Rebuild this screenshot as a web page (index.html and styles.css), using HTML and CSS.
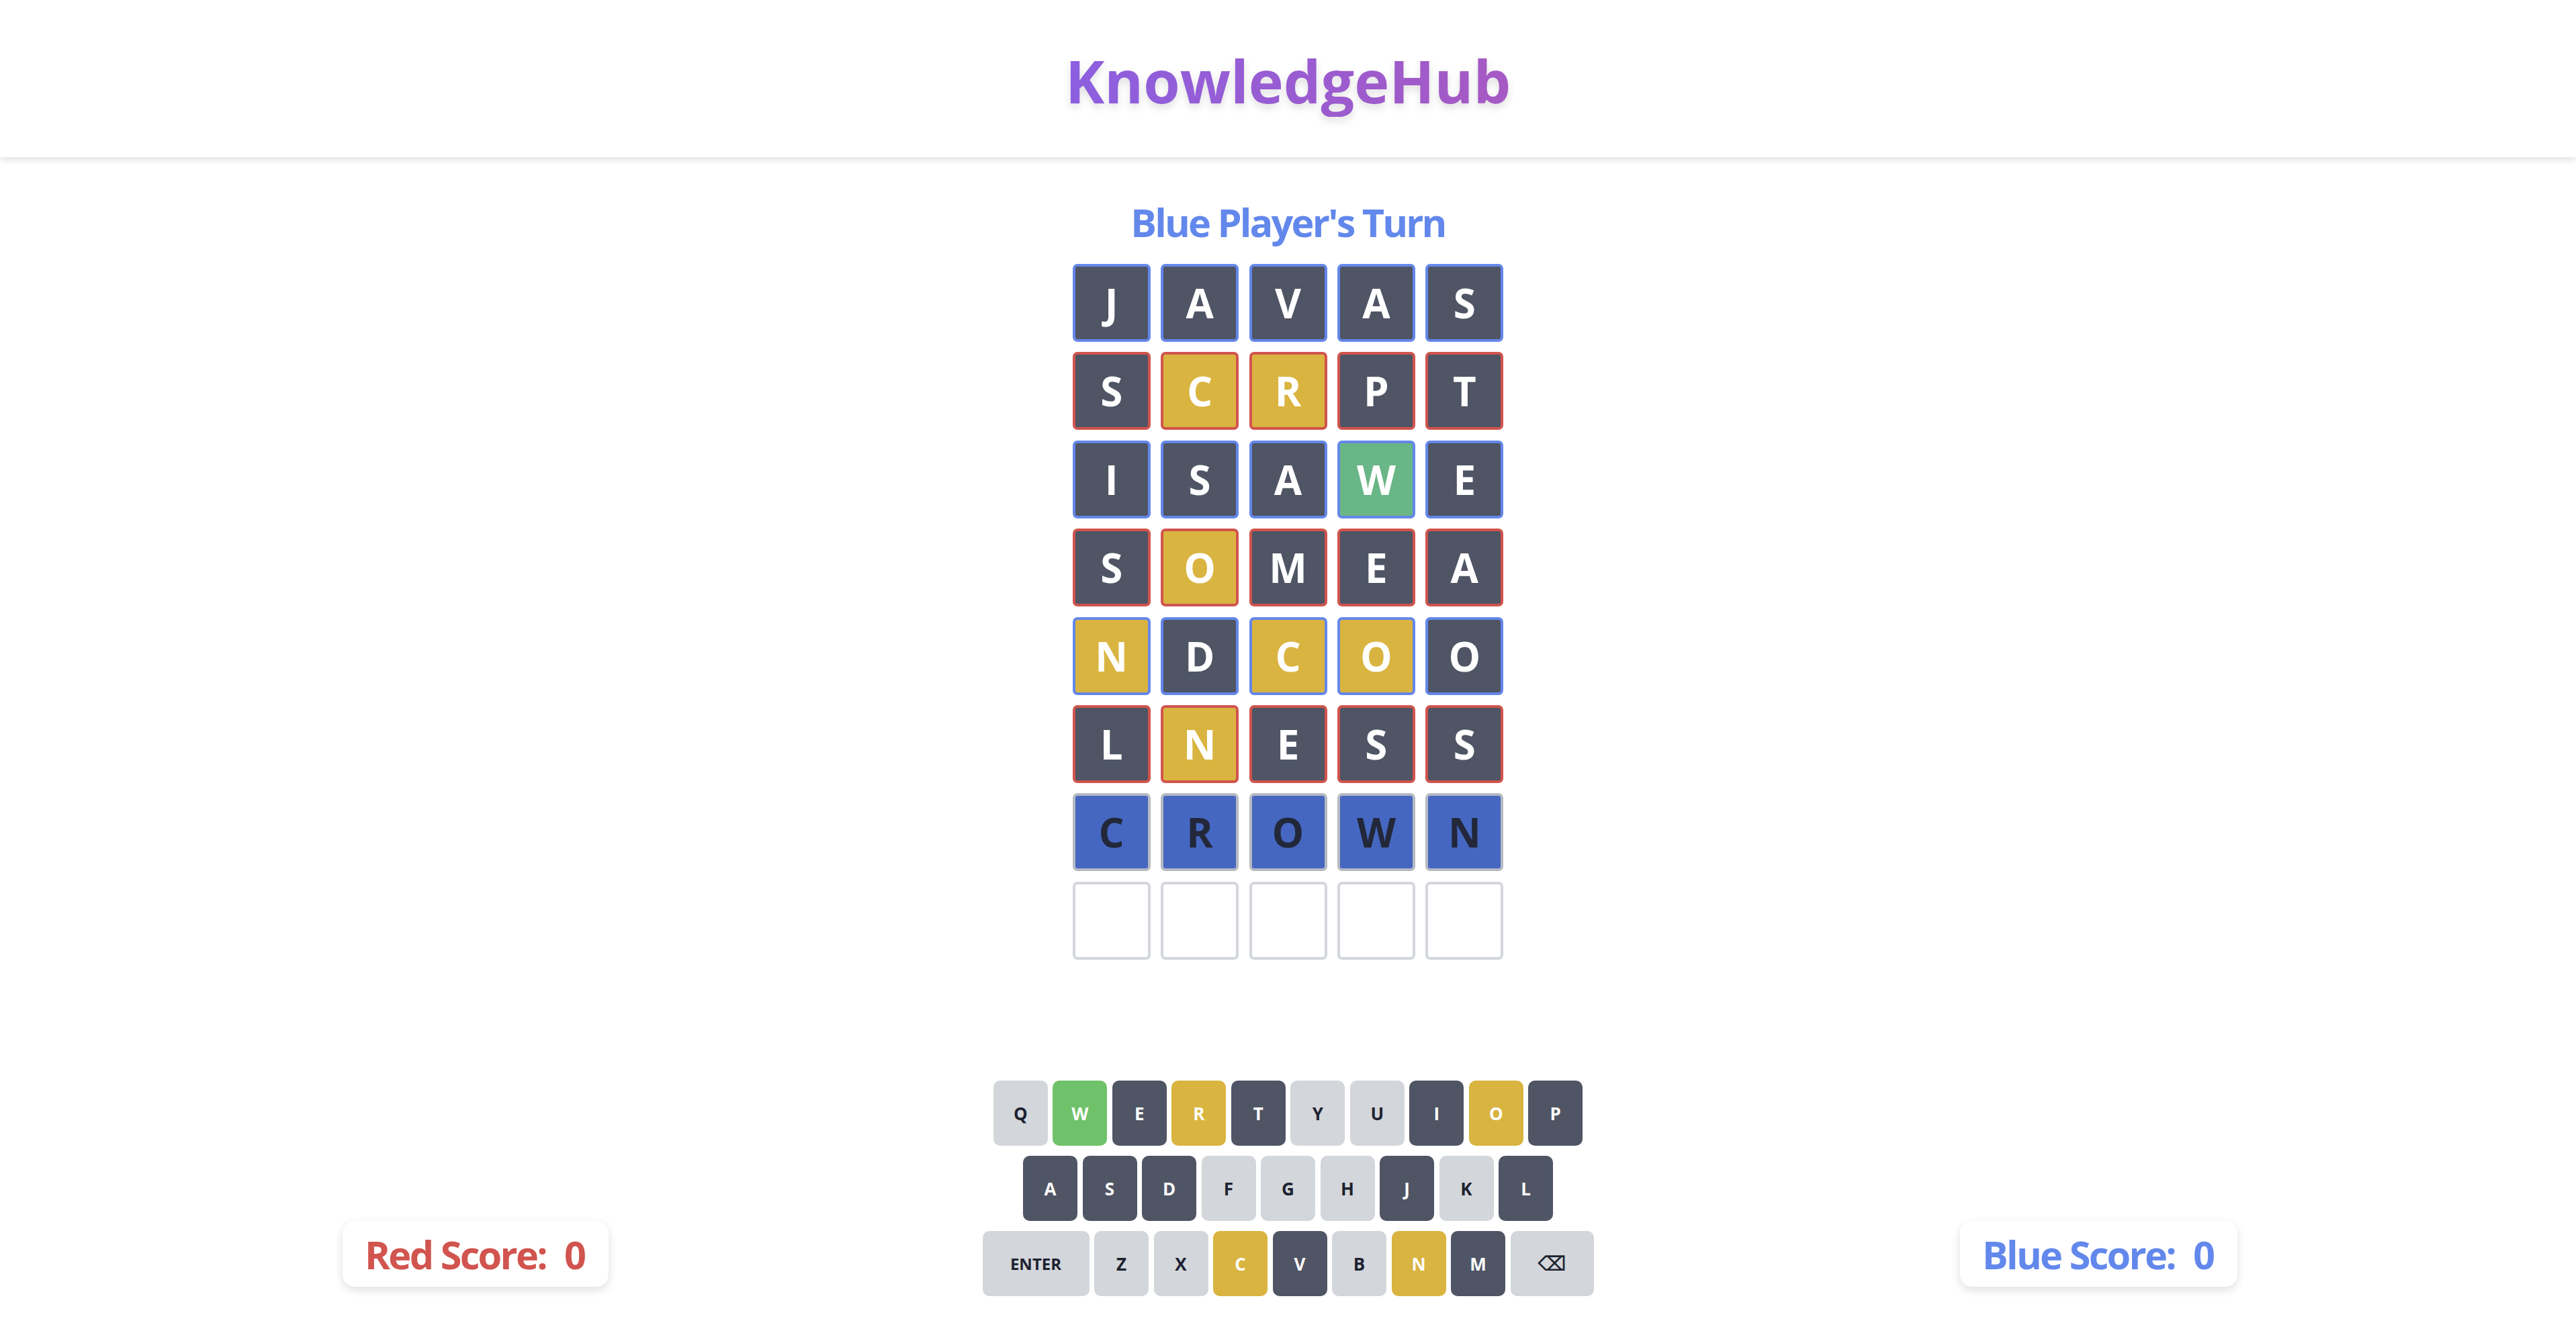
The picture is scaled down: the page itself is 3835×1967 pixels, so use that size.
FILE: index.html
```html
<!DOCTYPE html>
<html lang="en">
<head>
<meta charset="utf-8">
<title>KnowledgeHub</title>
<link rel="stylesheet" href="styles.css">
</head>
<body>
<div class="app">
  <header class="header">
    <h1 class="logo">KnowledgeHub</h1>
  </header>
  <main class="game">
    <h2 class="turn">Blue Player's Turn</h2>
    <div class="board">
      <div class="row row-blue">
        <div class="tile dark">J</div><div class="tile dark">A</div><div class="tile dark">V</div><div class="tile dark">A</div><div class="tile dark">S</div>
      </div>
      <div class="row row-red">
        <div class="tile dark">S</div><div class="tile yellow">C</div><div class="tile yellow">R</div><div class="tile dark">P</div><div class="tile dark">T</div>
      </div>
      <div class="row row-blue">
        <div class="tile dark">I</div><div class="tile dark">S</div><div class="tile dark">A</div><div class="tile green">W</div><div class="tile dark">E</div>
      </div>
      <div class="row row-red">
        <div class="tile dark">S</div><div class="tile yellow">O</div><div class="tile dark">M</div><div class="tile dark">E</div><div class="tile dark">A</div>
      </div>
      <div class="row row-blue">
        <div class="tile yellow">N</div><div class="tile dark">D</div><div class="tile yellow">C</div><div class="tile yellow">O</div><div class="tile dark">O</div>
      </div>
      <div class="row row-red">
        <div class="tile dark">L</div><div class="tile yellow">N</div><div class="tile dark">E</div><div class="tile dark">S</div><div class="tile dark">S</div>
      </div>
      <div class="row row-current">
        <div class="tile typed">C</div><div class="tile typed">R</div><div class="tile typed">O</div><div class="tile typed">W</div><div class="tile typed">N</div>
      </div>
      <div class="row row-empty">
        <div class="tile empty"></div><div class="tile empty"></div><div class="tile empty"></div><div class="tile empty"></div><div class="tile empty"></div>
      </div>
    </div>
  </main>
  <footer class="bottom">
    <div class="score-cell left">
      <div class="score score-red">Red Score:<span class="score-value">0</span></div>
    </div>
    <div class="keyboard">
      <div class="kb-row">
        <div class="key light">Q</div><div class="key green">W</div><div class="key dark">E</div><div class="key yellow">R</div><div class="key dark">T</div><div class="key light">Y</div><div class="key light">U</div><div class="key dark">I</div><div class="key yellow">O</div><div class="key dark">P</div>
      </div>
      <div class="kb-row">
        <div class="key dark">A</div><div class="key dark">S</div><div class="key dark">D</div><div class="key light">F</div><div class="key light">G</div><div class="key light">H</div><div class="key dark">J</div><div class="key light">K</div><div class="key dark">L</div>
      </div>
      <div class="kb-row">
        <div class="key light wide enter">ENTER</div><div class="key light">Z</div><div class="key light">X</div><div class="key yellow">C</div><div class="key dark">V</div><div class="key light">B</div><div class="key yellow">N</div><div class="key dark">M</div><div class="key light back">⌫</div>
      </div>
    </div>
    <div class="score-cell right">
      <div class="score score-blue">Blue Score:<span class="score-value">0</span></div>
    </div>
  </footer>
</div>
</body>
</html>
```
FILE: styles.css
```css
* { box-sizing: border-box; }

html, body {
  margin: 0;
  padding: 0;
  background: #ffffff;
}

body {
  font-family: "Open Sans", "Noto Sans", "DejaVu Sans", sans-serif;
  color: #1f2433;
}

.app {
  min-height: 100vh;
  display: flex;
  flex-direction: column;
}

.header {
  height: 234px;
  padding-top: 8px;
  display: flex;
  align-items: center;
  justify-content: center;
  background: #ffffff;
  box-shadow: 0 4px 10px rgba(0, 0, 0, 0.12);
  position: relative;
  z-index: 1;
}

.logo {
  margin: 0;
  font-size: 88px;
  font-weight: 700;
  line-height: 1.2;
  background: linear-gradient(90deg, #8c5fe0 0%, #a659c3 100%);
  -webkit-background-clip: text;
  background-clip: text;
  color: transparent;
  filter: drop-shadow(0 6px 6px rgba(0, 0, 0, 0.12));
}

.game {
  display: flex;
  flex-direction: column;
  align-items: center;
}

.turn {
  margin: 62px 0 28px;
  font-size: 57.6px;
  line-height: 69px;
  font-weight: 700;
  letter-spacing: -2.8px;
  color: #6388ec;
}

.board {
  display: flex;
  flex-direction: column;
  gap: 15.4px;
}

.row {
  display: flex;
  gap: 15.4px;
}

.tile {
  width: 116px;
  height: 116px;
  border: 4.8px solid #d3d6da;
  border-radius: 7px;
  display: flex;
  align-items: center;
  justify-content: center;
  font-size: 60px;
  font-weight: 700;
  color: #ffffff;
}

.row-blue .tile { border-color: #6487ea; }
.row-red .tile { border-color: #d1544e; }

.tile.dark { background: #4f5564; }
.tile.yellow { background: #d9b440; }
.tile.green { background: #69b686; }

.tile.typed {
  background: #4567c1;
  border-color: #b5b9c2;
  color: #222839;
}

.tile.empty {
  background: #ffffff;
  border-color: #d3d6da;
}

.bottom {
  margin-top: auto;
  display: grid;
  grid-template-columns: 1fr auto 1fr;
  align-items: end;
  padding-bottom: 37px;
}

.score-cell {
  display: flex;
  padding-bottom: 14px;
}

.score-cell.left { justify-content: flex-start; padding-left: 510px; }
.score-cell.right { justify-content: flex-end; padding-right: 504px; }

.score {
  height: 98px;
  padding: 0 33px;
  display: flex;
  align-items: center;
  background: #ffffff;
  border-radius: 18px;
  box-shadow: 0 5px 14px rgba(0, 0, 0, 0.13);
  font-size: 57.6px;
  font-weight: 700;
  letter-spacing: -2.7px;
  white-space: nowrap;
}

.score-red { color: #d1544f; }
.score-blue { color: #6388ec; }

.score-value { margin-left: 27px; letter-spacing: 0; }

.keyboard {
  display: flex;
  flex-direction: column;
  gap: 15px;
}

.kb-row {
  display: flex;
  justify-content: center;
  gap: 7.5px;
}

.key {
  width: 81px;
  height: 97px;
  border-radius: 10px;
  display: flex;
  align-items: center;
  justify-content: center;
  font-size: 26px;
  font-weight: 700;
  color: #ffffff;
}

.key.light { background: #d3d6da; color: #1d2231; }
.key.dark { background: #4f5564; }
.key.yellow { background: #d9b440; }
.key.green { background: #70c26a; }

.key.enter { width: 159px; font-size: 24px; }
.key.back {
  width: 124px;
  font-family: "DejaVu Sans", sans-serif;
  font-size: 30px;
  font-weight: 700;
  color: #1d2231;
}
```
